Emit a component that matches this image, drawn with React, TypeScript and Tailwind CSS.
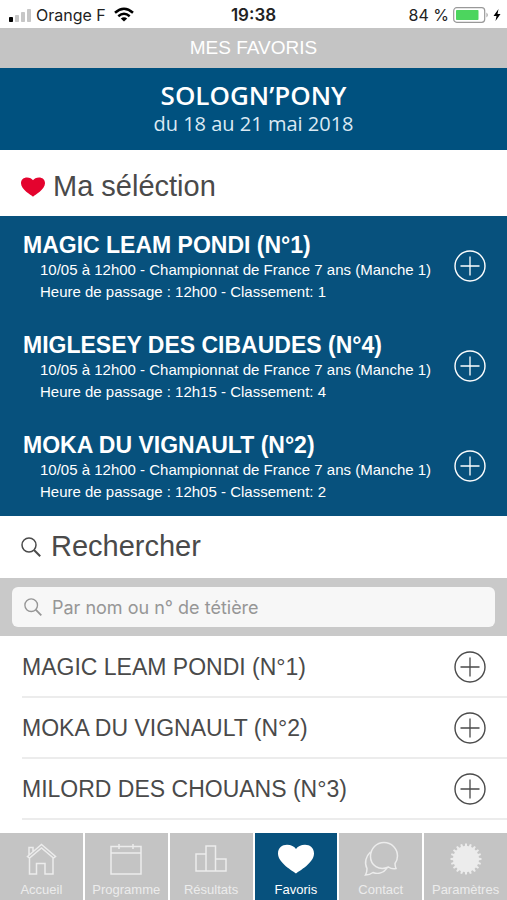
import React from 'react';

interface Favorite {
  name: string;
  event: string;
  result: string;
}

const favorites: Favorite[] = [
  {
    name: 'MAGIC LEAM PONDI (N°1)',
    event: '10/05 à 12h00 - Championnat de France 7 ans (Manche 1)',
    result: 'Heure de passage : 12h00 - Classement: 1',
  },
  {
    name: 'MIGLESEY DES CIBAUDES (N°4)',
    event: '10/05 à 12h00 - Championnat de France 7 ans (Manche 1)',
    result: 'Heure de passage : 12h15 - Classement: 4',
  },
  {
    name: 'MOKA DU VIGNAULT (N°2)',
    event: '10/05 à 12h00 - Championnat de France 7 ans (Manche 1)',
    result: 'Heure de passage : 12h05 - Classement: 2',
  },
];

const results = ['MAGIC LEAM PONDI (N°1)', 'MOKA DU VIGNAULT (N°2)', 'MILORD DES CHOUANS (N°3)'];

const HEART =
  'M18 29.500C15 27 0 19 0 9.500C0 4 4 .8 9 .8C13 .8 16.500 2.500 18 5C19.500 2.500 23 .8 27 .8C32 .8 36 4 36 9.500C36 19 21 27 18 29.500Z';

// Cog outline: alternates between two radii, four points per tooth.
const gearPoints = (() => {
  const teeth = 20;
  const pts: string[] = [];
  for (let i = 0; i < teeth; i++) {
    const a = (i / teeth) * Math.PI * 2;
    [
      [-0.09, 13],
      [-0.06, 15.5],
      [0.06, 15.5],
      [0.09, 13],
    ].forEach(([d, r]) => {
      pts.push(`${(16 + r * Math.sin(a + d)).toFixed(2)},${(16 - r * Math.cos(a + d)).toFixed(2)}`);
    });
  }
  return pts.join(' ');
})();

const SearchIcon: React.FC<{ className: string }> = ({ className }) => (
  <svg className={className} viewBox="0 0 20 20" fill="none" stroke="currentColor">
    <circle cx="8" cy="8" r="7" strokeWidth="1.5" />
    <path d="M13 13L19.200 19.200" strokeWidth="2" />
  </svg>
);

const AddButton: React.FC<{ label: string }> = ({ label }) => (
  <button type="button" aria-label={label} className="size-8 shrink-0">
    <svg className="size-8" viewBox="0 0 32 32" fill="none" stroke="currentColor">
      <circle cx="16" cy="16" r="15" strokeWidth="1.4" />
      <path d="M16 6.500V25.500M6.500 16H25.500" strokeWidth="1.3" />
    </svg>
  </button>
);

const StatusBar: React.FC = () => (
  <div className="grid h-7 grid-cols-3 items-center px-1.5 pt-0.5 font-['Inter',sans-serif] text-[16px] leading-6 text-[#222]">
    <div className="flex items-center gap-1">
      <svg className="ml-0.5 h-4 w-6 shrink-0" viewBox="0 0 24 16">
        <rect x="1" y="10" width="4" height="5" rx="0.800" fill="#000" />
        <rect x="7" y="8" width="4" height="7" rx="0.800" fill="#c6c6c6" />
        <rect x="13" y="5" width="4" height="10" rx="0.800" fill="#c6c6c6" />
        <rect x="19" y="2" width="4" height="13" rx="0.800" fill="#c6c6c6" />
      </svg>
      <span className="whitespace-nowrap">Orange F</span>
      <svg className="ml-1 h-4 w-5 shrink-0" viewBox="0 0 20 16" fill="none" stroke="#000" strokeWidth="2.500">
        <path d="M1 5.800Q10 -2.200 19 5.800" />
        <path d="M4.300 9.200Q10 4.200 15.700 9.200" />
        <path d="M10 14.500L6.800 11.500Q10 8.800 13.200 11.500Z" fill="#000" stroke="none" />
      </svg>
    </div>
    <div className="text-center text-[17px] font-semibold">19:38</div>
    <div className="flex items-center justify-end gap-1">
      <span className="whitespace-nowrap">84 %</span>
      <svg className="h-4 w-9 shrink-0" viewBox="0 0 36 16">
        <rect x="0.700" y="0.700" width="31" height="14.600" rx="3" fill="#fff" stroke="#999" strokeWidth="1.200" />
        <rect x="3" y="3" width="22.500" height="10" rx="0.800" fill="#4cd55e" />
        <path d="M33.500 5.500Q36 8 33.500 10.500Z" fill="#999" />
      </svg>
      <svg className="h-3 w-2 shrink-0" viewBox="0 0 8 12">
        <path d="M5.500 0L0.500 7H3.500L2.500 12L7.500 5H4.500Z" fill="#000" />
      </svg>
    </div>
  </div>
);

const tabs: { label: string; active?: boolean; icon: React.ReactNode }[] = [
  {
    label: 'Accueil',
    icon: (
      <path d="M2.500 13.500L16.500 1.500L30.500 13.500L28.500 15L16.500 5L4.500 15ZM4 12V4.500H8V8.500M4.500 15V31H11.500V20.500H20V31H28V15" />
    ),
  },
  {
    label: 'Programme',
    icon: <path d="M1 3.500H31V31H1ZM1 10H31M9 1V6M23 1V6" />,
  },
  {
    label: 'Résultats',
    icon: <path d="M1 11H11V28H1ZM11 3H20.500V28H11ZM20.500 16H31V28H20.500Z" />,
  },
  {
    label: 'Favoris',
    active: true,
    icon: <path d={HEART} transform="translate(-2 1)" fill="currentColor" stroke="none" />,
  },
  {
    label: 'Contact',
    icon: (
      <>
        <path d="M31 25.500C28 26 25.500 25.500 23.500 24C14 28.500 5.500 22 5.500 13.500C5.500 5.500 11.500 -0.500 19 -0.500C26.500 -0.500 32.500 5.500 32.500 13C32.500 16 31.500 18.500 30 20.500C30 22.500 30.500 24.500 31 25.500Z" />
        <path d="M5.500 9C1 13 -1 20 2 25.500C2 28 1.500 30.500 0.500 32C3.500 32 6 31 8 29.500C13 31.500 18.500 30 22 25" />
      </>
    ),
  },
  {
    label: 'Paramètres',
    icon: <polygon points={gearPoints} fill="currentColor" stroke="none" />,
  },
];

const TabBar: React.FC = () => (
  <nav className="sticky bottom-0 mt-auto grid grid-cols-6 gap-0.5 bg-white">
    {tabs.map((tab) => (
      <a
        key={tab.label}
        href="#"
        aria-current={tab.active ? 'page' : undefined}
        className={
          tab.active
            ? 'flex h-[67px] flex-col items-center bg-[#07517d] pt-2.5 text-white'
            : 'flex h-[67px] flex-col items-center bg-[#c4c4c4] pt-2.5 text-[#ececec]'
        }
      >
        <svg
          className="h-9 w-8 overflow-visible"
          viewBox="0 0 32 36"
          fill="none"
          stroke="currentColor"
          strokeWidth="1.500"
        >
          {tab.icon}
        </svg>
        <span className="mt-[3px] text-[13px] leading-4">{tab.label}</span>
      </a>
    ))}
  </nav>
);

const App: React.FC = () => (
  <div className="flex min-h-screen flex-col bg-white font-['Liberation_Sans',Arial,sans-serif] text-[#4a4a4a]">
    <StatusBar />

    <header>
      <div className="bg-[#c4c4c4] text-center text-[19px] leading-10 text-white">MES FAVORIS</div>
      <div className="bg-[#00517f] py-3 text-center font-['Open_Sans',sans-serif] text-white">
        <h1 className="text-[26px] leading-[30px] font-semibold">SOLOGN’PONY</h1>
        <p className="text-[20px] leading-7 text-[#dbe9f3]">du 18 au 21 mai 2018</p>
      </div>
    </header>

    <section>
      <h2 className="flex h-[66px] items-center gap-2 px-[21px] pt-2 text-[29px]">
        <svg className="h-5 w-6" viewBox="0 0 36 30">
          <path d={HEART} fill="#e4032e" />
        </svg>
        Ma séléction
      </h2>
      <ul className="bg-[#07517d] text-white">
        {favorites.map((fav) => (
          <li key={fav.name} className="flex h-[100px] items-center justify-between pr-[21px] pl-[23px]">
            <div className="pt-0.5">
              <h3 className="text-[23px] leading-7 font-bold">{fav.name}</h3>
              <p className="pl-[17px] text-[15px] leading-[22px]">{fav.event}</p>
              <p className="pl-[17px] text-[15px] leading-[22px]">{fav.result}</p>
            </div>
            <AddButton label={`Détails ${fav.name}`} />
          </li>
        ))}
      </ul>
    </section>

    <section>
      <h2 className="flex h-[62px] items-center gap-2.5 px-[21px] text-[29px]">
        <SearchIcon className="size-5" />
        Rechercher
      </h2>
      <div className="bg-[#c9c9c9] px-3 py-[9px]">
        <label className="flex h-10 items-center gap-2.5 rounded-md bg-[#f7f7f7] px-3 text-[#969696]">
          <SearchIcon className="size-[18px] shrink-0" />
          <input
            type="search"
            aria-label="Rechercher par nom ou n° de tétière"
            placeholder="Par nom ou n° de tétière"
            className="min-w-0 flex-1 bg-transparent font-['Inter',sans-serif] text-[18px] outline-none placeholder:text-[#969696]"
          />
        </label>
      </div>
      <ul className="pt-px pl-[22px]">
        {results.map((name) => (
          <li
            key={name}
            className="flex h-[61px] items-center justify-between border-b-2 border-[#ececec] pr-[21px] text-[23px]"
          >
            <span className="pt-0.5">{name}</span>
            <AddButton label={`Ajouter ${name}`} />
          </li>
        ))}
      </ul>
    </section>

    <TabBar />
  </div>
);

export default App;
